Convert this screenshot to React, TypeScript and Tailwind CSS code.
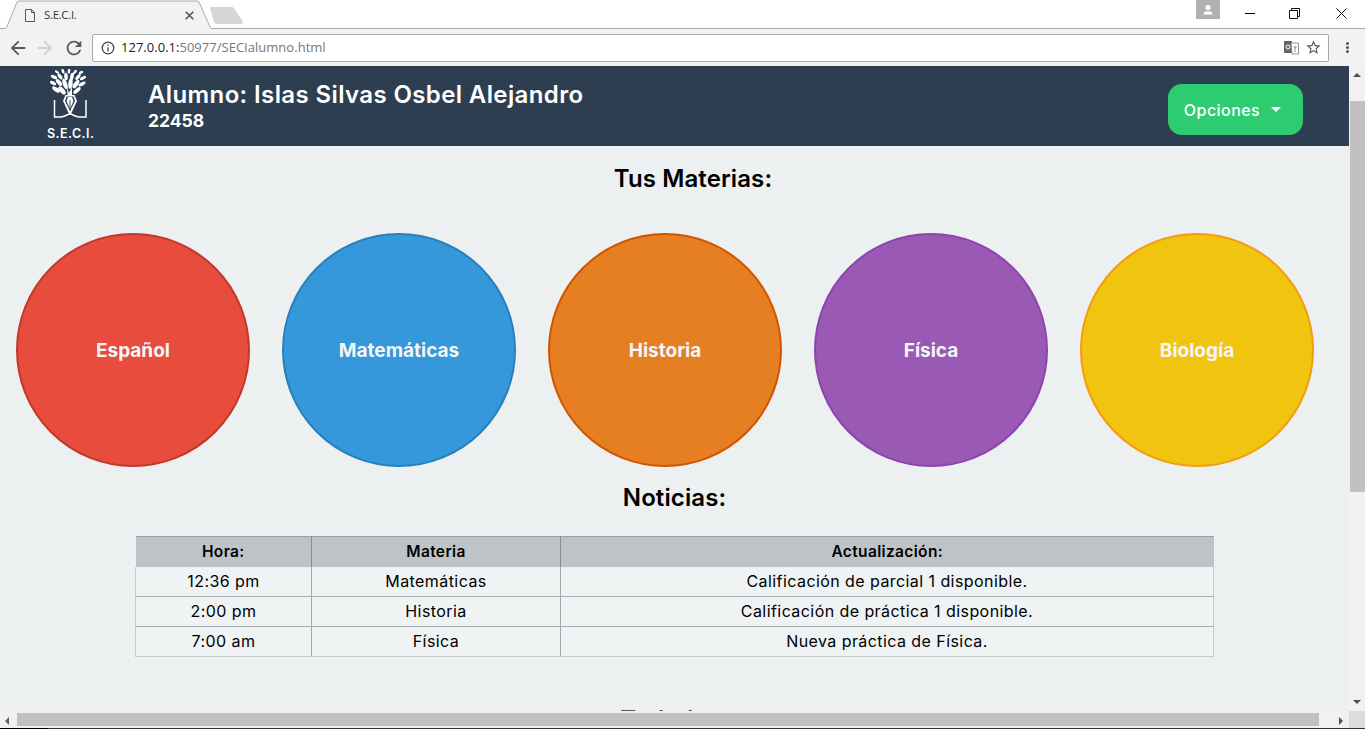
import React from "react";

const subjects = [
  { name: "Español", cls: "bg-[#e74c3c] border-[#c0392b]" },
  { name: "Matemáticas", cls: "bg-[#3498db] border-[#2980b9]" },
  { name: "Historia", cls: "bg-[#e67e22] border-[#d35400]" },
  { name: "Física", cls: "bg-[#9b59b6] border-[#8e44ad]" },
  { name: "Biología", cls: "bg-[#f1c40f] border-[#f39c12]" },
];

const rows = [
  ["12:36 pm", "Matemáticas", "Calificación de parcial 1 disponible."],
  ["2:00 pm", "Historia", "Calificación de práctica 1 disponible."],
  ["7:00 am", "Física", "Nueva práctica de Física."],
];

function Logo() {
  const leaves: [number, number, number, number, number][] = [
    [7, 3, 2.4, 1.3, 35], [13, 2.2, 2.500, 1.3, 70], [19, 2.2, 2.500, 1.3, 100], [25, 3, 2.500, 1.3, 130], [31, 3.500, 2.500, 1.3, 150],
    [4, 8, 3.4, 1.6, 25], [10, 7.5, 3.500, 1.7, 55], [16, 7.5, 3.800, 1.8, 85], [22, 7.5, 3.800, 1.8, 100], [28, 8, 3.500, 1.7, 130], [33, 9, 3.400, 1.5, 150],
    [3, 14, 3.400, 1.6, 30], [9, 13.5, 4.200, 2, 50], [15, 15, 5.500, 2.200, 70], [20.500, 14.500, 5.500, 2.200, 95], [26, 15, 5, 2.100, 125], [32, 15, 4, 1.700, 150],
    [6, 20.500, 4.500, 2, 35], [12, 21.500, 5, 2.300, 50], [27, 21.500, 4.500, 1.900, 140],
  ];
  return (
    <svg width="38" height="50" viewBox="0 0 38 50" fill="#fff" aria-hidden="true">
      {leaves.map(([x, y, rx, ry, r], i) => (
        <ellipse key={i} cx={x} cy={y} rx={rx} ry={ry} transform={`rotate(${r} ${x} ${y})`} />
      ))}
      <path d="M17 18 L19 24 L22 18 L22 26 L17.500 26 Z" />
      <path d="M15.500 26 H24.500 L27 32 L20.500 46 L19.500 46 L13 32 Z" />
      <path d="M16.500 27.500 H23.500 L25 32 L20 42 L15 32 Z" fill="#2c3e50" />
      <path d="M18 28 H22 L23.500 32 L20 40 L16.500 32 Z" fill="#fff" />
      <path d="M20 31 V42" stroke="#2c3e50" strokeWidth="0.9" />
      <path d="M4.500 31 V48 H11 C14 48 17 46 20 44.500 C23 46 26 48 29 48 H36 V31" fill="none" stroke="#fff" strokeWidth="1.500" />
    </svg>
  );
}

function ChromeTabs() {
  return (
    <div className="relative flex h-[29px] items-start bg-white border-b border-[#a9a9a9]">
      <svg className="absolute left-0 top-0" width="250" height="29" viewBox="0 0 250 29" aria-hidden="true">
        <path d="M6 29 L17 2 Q17.500 1 19 1 H197 Q198.500 1 199 2 L211 29 Z" fill="#f2f2f2" stroke="#a9a9a9" />
        <path d="M6 28.500 H211" stroke="#f2f2f2" />
        <path d="M210 8 Q210 7 212 7 H232 Q233 7 234 8 L243 22 Q243 24 241 24 H217 Q215 24 214 22 Z" fill="#d6d6d6" />
      </svg>
      <div className="relative flex h-[30px] w-[212px] items-center pl-[25px] pr-[18px]">
        <svg width="10" height="13" viewBox="0 0 10 13" fill="none" stroke="#5a5a5a" aria-hidden="true">
          <path d="M.5.5H6.500L9.500 3.500V12.500H.5Z M6.500.5V3.500H9.500" />
        </svg>
        <span className="ml-[9px] flex-1 font-['Open_Sans',sans-serif] text-[11.500px] tracking-[-0.35px] text-[#333]">S.E.C.I.</span>
        <svg width="9" height="9" viewBox="0 0 9 9" stroke="#555" strokeWidth="1.600" aria-hidden="true">
          <path d="M.7.7 8.300 8.300M8.300.7.7 8.300" />
        </svg>
      </div>
      <div className="ml-auto flex h-[28px] items-start">
        <div className="mr-[7px] flex h-[19px] w-[24px] items-center justify-center bg-[#b0b0b0]">
          <svg width="12" height="12" viewBox="0 0 12 12" fill="#fff" aria-hidden="true">
            <circle cx="6" cy="3.500" r="2.600" />
            <path d="M1.500 10.500c0-2.500 2-3.200 4.500-3.200s4.500.7 4.500 3.200z" />
          </svg>
        </div>
        <div className="flex h-[26px] w-[46px] items-center justify-center">
          <div className="h-px w-[10px] bg-black" />
        </div>
        <div className="flex h-[26px] w-[46px] items-center justify-center pr-[3px]">
          <svg width="11" height="11" viewBox="0 0 11 11" fill="none" stroke="#111" aria-hidden="true">
            <path d="M.5 2.500H8.500V10.500H.5Z M2.500 2.500V.5H10.500V8.500H8.500" />
          </svg>
        </div>
        <div className="flex h-[26px] w-[46px] items-center justify-center pr-[1px]">
          <svg width="11" height="11" viewBox="0 0 11 11" stroke="#111" aria-hidden="true">
            <path d="M.5.5 10.500 10.500M10.500.5.5 10.500" />
          </svg>
        </div>
      </div>
    </div>
  );
}

function Toolbar() {
  return (
    <div className="flex h-[37px] items-center bg-[#f2f2f2] pl-[7px]">
      <svg width="22" height="22" viewBox="0 0 24 24" fill="#5a5a5a" aria-hidden="true">
        <path d="M20 11H7.830l5.590-5.590L12 4l-8 8 8 8 1.410-1.410L7.830 13H20v-2z" />
      </svg>
      <svg className="ml-[5px]" width="22" height="22" viewBox="0 0 24 24" fill="#d2d2d2" aria-hidden="true">
        <path d="M12 4l-1.410 1.410L16.170 11H4v2h12.170l-5.580 5.590L12 20l8-8z" />
      </svg>
      <svg className="ml-[7px]" width="22" height="22" viewBox="0 0 24 24" fill="#5a5a5a" aria-hidden="true">
        <path d="M17.650 6.350A7.958 7.958 0 0 0 12 4c-4.420 0-7.990 3.580-8 8s3.580 8 8 8c3.730 0 6.840-2.550 7.730-6h-2.080A5.990 5.990 0 0 1 12 18c-3.310 0-6-2.690-6-6s2.690-6 6-6c1.660 0 3.140.69 4.220 1.780L13 11h7V4l-2.350 2.350z" />
      </svg>
      <div className="ml-[7px] flex h-[28px] w-[1237px] items-center rounded-[2px] border border-[#a9a9a9] bg-white pl-[8px] pr-[6px]">
        <svg width="14" height="14" viewBox="0 0 14 14" fill="none" stroke="#444" strokeWidth="1.300" aria-hidden="true">
          <circle cx="7" cy="7" r="5.800" />
          <path d="M7 6.200V10.500M7 3.500V5" />
        </svg>
        <span className="ml-[6px] flex-1 font-['Open_Sans',sans-serif] text-[13px] tracking-[0.02px] text-[#777]">
          <span className="text-[#222]">127.0.0.1:</span>50977/SECIalumno.html
        </span>
        <svg width="15" height="15" viewBox="0 0 15 15" aria-hidden="true">
          <path d="M0 1H8V13H0Z" fill="#666" />
          <path d="M7 3H14.500V14H8Z" fill="#fff" stroke="#777" strokeWidth=".8" />
          <circle cx="4" cy="7" r="2" fill="none" stroke="#fff" />
          <path d="M9.500 7H13M11 6V12" stroke="#777" strokeWidth=".8" />
        </svg>
        <svg className="ml-[6px]" width="17" height="17" viewBox="0 0 24 24" fill="#5a5a5a" aria-hidden="true">
          <path d="M22 9.240l-7.190-.62L12 2 9.190 8.630 2 9.240l5.460 4.730L5.820 21 12 17.270 18.180 21l-1.630-7.030L22 9.240zM12 15.400l-3.760 2.270 1-4.280-3.320-2.880 4.380-.38L12 6.100l1.710 4.040 4.380.38-3.320 2.880 1 4.280L12 15.400z" />
        </svg>
      </div>
      <div className="ml-[17px] flex flex-col gap-[1px]">
        <div className="h-[3px] w-[3px] rounded-full bg-[#555]" />
        <div className="h-[3px] w-[3px] rounded-full bg-[#555]" />
        <div className="h-[3px] w-[3px] rounded-full bg-[#555]" />
      </div>
    </div>
  );
}

function Page() {
  return (
    <div className="h-full w-[1349px] overflow-hidden bg-[#ecf0f1] font-['Inter',sans-serif] text-black">
      <header className="flex h-[80px] items-center bg-[#2c3e50] pl-[46px] pr-[46px] text-white">
        <div className="flex w-[102px] flex-col items-start pb-[2px]">
          <div className="ml-[4px]"><Logo /></div>
          <span className="mt-[7px] ml-[1px] text-[12.500px] leading-[15px] font-semibold tracking-[0.45px]">S.E.C.I.</span>
        </div>
        <div className="flex-1">
          <h1 className="text-[24px] leading-[28px] font-semibold tracking-[0.38px]">Alumno: Islas Silvas Osbel Alejandro</h1>
          <p className="pt-[1px] text-[17.500px] leading-[22px] font-bold">22458</p>
        </div>
        <button className="mt-[7px] flex h-[51px] w-[135px] items-center justify-center gap-[11px] rounded-[14px] bg-[#2ecc71] pr-[6px] text-[16px] font-medium tracking-[0.45px]">
          Opciones
          <svg width="10" height="5" viewBox="0 0 10 5" fill="#fff" aria-hidden="true"><path d="M0 0H10L5 5Z" /></svg>
        </button>
      </header>

      <h2 className="w-[1386px] pt-[18px] text-center text-[24px] leading-[30px] font-semibold tracking-[0.1px]">Tus Materias:</h2>

      <div className="mt-[39px] flex w-[1349px] gap-[32px] pl-[16px]">
        {subjects.map((s) => (
          <div key={s.name} className={`flex h-[234px] w-[234px] shrink-0 items-center justify-center rounded-full border-2 pt-[2px] ${s.cls}`}>
            <span className="text-[19px] font-bold text-[#f4f6f7]">{s.name}</span>
          </div>
        ))}
      </div>

      <h2 className="pt-[16px] text-center text-[24px] leading-[30px] font-semibold tracking-[0.1px]">Noticias:</h2>

      <table className="mx-auto mt-[23px] w-[1079px] table-fixed border-collapse text-[16px] tracking-[0.43px]">
        <colgroup>
          <col className="w-[176px]" />
          <col className="w-[249px]" />
          <col />
        </colgroup>
        <thead>
          <tr className="h-[30px] bg-[#bdc3c7]">
            {["Hora:", "Materia", "Actualización:"].map((h, i) => (
              <th
                key={h}
                className={`border-t border-t-[#9aa1a5] p-0 text-center text-[15.500px] font-semibold tracking-[0.35px] ${i < 2 ? "border-r border-r-[#878e91]" : ""}`}
              >
                {h}
              </th>
            ))}
          </tr>
        </thead>
        <tbody>
          {rows.map((r, ri) => (
            <tr key={r[0]} className="h-[30px] bg-[#eff3f4]">
              {r.map((c, i) => (
                <td
                  key={c}
                  className={`border-b p-0 pb-[1px] text-center ${ri === 2 ? "border-b-[#c6ccce]" : "border-b-[#a8afb2]"} ${i < 2 ? "border-r border-r-[#a0a7aa]" : "border-r border-r-[#c6ccce]"} ${i === 0 ? "border-l border-l-[#c6ccce]" : ""}`}
                >
                  {c}
                </td>
              ))}
            </tr>
          ))}
        </tbody>
      </table>

      <h2 className="w-[1349px] pt-[48px] text-center text-[24px] leading-[30px] font-semibold text-[#555]">Trabajos:</h2>
    </div>
  );
}

export default function App() {
  return (
    <div className="flex h-[729px] w-[1365px] flex-col overflow-hidden bg-white">
      <ChromeTabs />
      <Toolbar />
      <div className="flex min-h-0 flex-1 flex-col">
        <div className="flex min-h-0 flex-1">
          <div className="min-w-0 flex-1 overflow-hidden"><Page /></div>
          <div className="flex w-[16px] flex-col items-center bg-[#f1f1f1]">
            <svg className="mt-[7px]" width="8" height="4" viewBox="0 0 8 4" fill="#505050" aria-hidden="true"><path d="M0 4H8L4 0Z" /></svg>
            <div className="mt-[24px] h-[391px] w-[15px] bg-[#c1c1c1]" />
            <svg className="mt-auto mb-[7px]" width="8" height="4" viewBox="0 0 8 4" fill="#505050" aria-hidden="true"><path d="M0 0H8L4 4Z" /></svg>
          </div>
        </div>
        <div className="flex h-[17px] items-start bg-[#f1f1f1]">
          <svg className="mt-[6px] ml-[5px]" width="4" height="8" viewBox="0 0 4 8" fill="#606060" aria-hidden="true"><path d="M4 0V8L0 4Z" /></svg>
          <div className="mt-[2px] ml-[8px] h-[13px] w-[1302px] bg-[#c1c1c1]" />
          <svg className="mt-[6px] ml-[20px]" width="4" height="8" viewBox="0 0 4 8" fill="#505050" aria-hidden="true"><path d="M0 0V8L4 4Z" /></svg>
          <div className="ml-auto h-[17px] w-[16px] bg-[#dcdcdc]" />
        </div>
        <div className="flex h-px bg-[#333]">
          <div className="h-px w-[48px] bg-black" />
        </div>
      </div>
    </div>
  );
}
